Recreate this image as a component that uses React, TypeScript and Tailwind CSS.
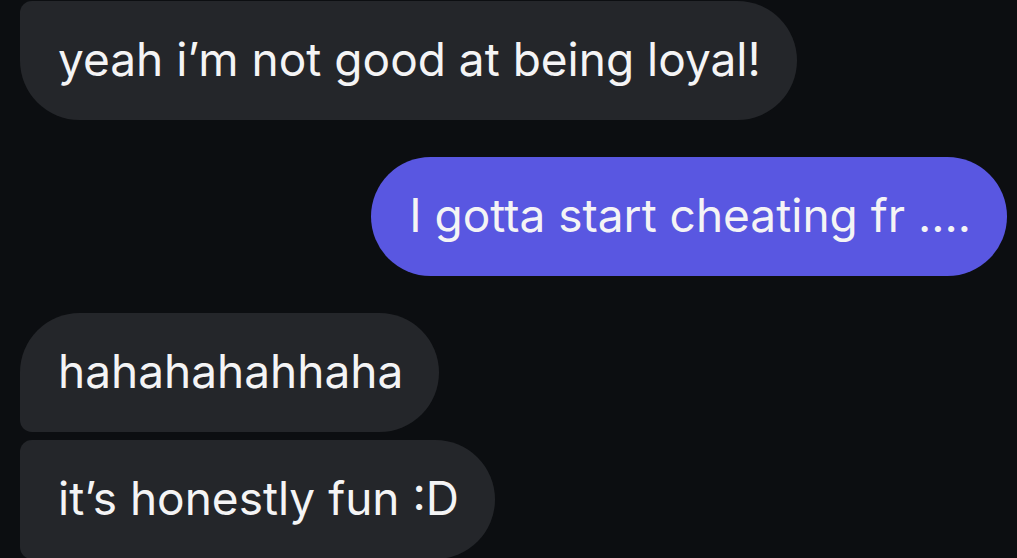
const Bubble = ({ text, mine, corners }: { text: string; mine?: boolean; corners: string }) => (
  <div className={`flex ${mine ? 'justify-end' : 'justify-start'}`}>
    <div
      className={`h-[119px] flex items-center pl-[38px] pr-[36px] pb-[2px] text-[46px] text-[#f4f4f5] whitespace-nowrap ${corners} ${
        mine ? 'bg-[#5957e1]' : 'bg-[#24262a]'
      }`}
    >
      {text}
    </div>
  </div>
);

export default function App() {
  return (
    <div
      className="w-[1017px] h-[558px] overflow-hidden bg-[#0c0e11] pl-[20px] pr-[10px] pt-[1px]"
      style={{ fontFamily: 'Inter, "Noto Sans", sans-serif' }}
    >
      <Bubble text="yeah i’m not good at being loyal!" corners="rounded-tl-[12px] rounded-bl-[60px] rounded-r-[60px]" />
      <div className="h-[37px]" />
      <Bubble text="I gotta start cheating fr ...." mine corners="rounded-[60px]" />
      <div className="h-[37px]" />
      <Bubble text="hahahahahhaha" corners="rounded-tl-[60px] rounded-bl-[12px] rounded-r-[60px]" />
      <div className="h-[8px]" />
      <Bubble text="it’s honestly fun :D" corners="rounded-tl-[12px] rounded-bl-[12px] rounded-r-[60px]" />
    </div>
  );
}
